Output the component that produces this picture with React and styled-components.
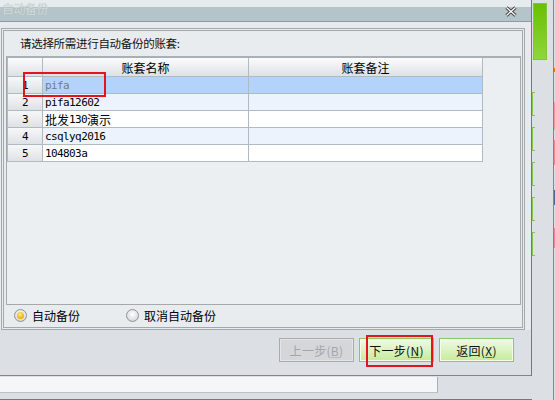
import React from "react";
import styled, { createGlobalStyle } from "styled-components";

const GlobalStyle = createGlobalStyle`
  html, body {
    margin: 0;
    padding: 0;
    background: #dcdfe3;
    overflow: hidden;
  }
  body {
    font-family: "Noto Sans CJK SC", "Liberation Sans", sans-serif;
    font-size: 12px;
    color: #000;
  }
  #root {
    width: 555px;
    height: 400px;
    overflow: hidden;
  }
`;

const Page = styled.div`
  position: relative;
  display: grid;
  grid-template-columns: 532px 21px 1px 1px;
  width: 555px;
  height: 400px;
  background: #dcdfe3;
`;

const LeftColumn = styled.div`
  display: flex;
  flex-direction: column;
  width: 532px;
  overflow: hidden;
`;

const Dialog = styled.div`
  display: flex;
  flex-direction: column;
  width: 532px;
  height: 376px;
  box-sizing: border-box;
  border-right: 1px solid #6f7a80;
  border-bottom: 1px solid #7c868c;
  background: #e8ebee;
`;

const TitleBar = styled.div`
  display: flex;
  align-items: flex-start;
  justify-content: space-between;
  height: 22px;
  box-sizing: border-box;
  padding: 2px 14px 0 2px;
  border-bottom: 1px solid #8c9ca2;
  background: linear-gradient(#e6ebed 0, #e6ebed 7px, #b4c4c8 7px, #b4c4c8 100%);
`;

const Title = styled.span`
  font-size: 12px;
  line-height: 14px;
  letter-spacing: -0.5px;
  color: #d3d9db;
  text-shadow: 0 0 1px #a9b6ba;
`;

const Close = styled.svg`
  margin-top: 4px;
`;

const Body = styled.div`
  padding: 6px 0 0 1px;
`;

const GroupBox = styled.div`
  display: flex;
  flex-direction: column;
  width: 524px;
  height: 302px;
  box-sizing: border-box;
  border: 3px double #a2a8ac;
  background: #e9ecef;
`;

const Prompt = styled.div`
  height: 25px;
  box-sizing: border-box;
  padding: 5px 0 0 16px;
  font-size: 11.5px;
  line-height: 14px;
  letter-spacing: -0.3px;
  color: #111;
`;

const GridBox = styled.div`
  height: 249px;
  margin: 0 1px 0 2px;
  box-sizing: border-box;
  border: 1px solid #a3a9ae;
  border-top: 2px solid #a9afb4;
  background: #eceff2;
`;

const Table = styled.div`
  display: flex;
  flex-direction: column;
  width: 476px;
  border-left: 1px solid #b1b9c1;
`;

const Row = styled.div`
  display: flex;
  height: ${p => (p.$header ? 19 : 17)}px;
`;

const Cell = styled.div`
  display: flex;
  align-items: center;
  justify-content: ${p => (p.$center ? "center" : "flex-start")};
  width: ${p => p.$w}px;
  box-sizing: border-box;
  padding-left: ${p => (p.$center ? 0 : 2)}px;
  border-right: 1px solid #b1b9c1;
  border-bottom: 1px solid #b1b9c1;
  background: ${p => p.$bg};
  color: ${p => p.$color || "#000"};
  font-family: "DejaVu Sans Mono", "Noto Sans CJK SC", monospace;
  font-size: 11px;
  letter-spacing: -0.6px;
  white-space: nowrap;
  overflow: hidden;
`;

const HeadCell = styled(Cell)`
  font-family: "Noto Sans CJK SC", sans-serif;
  font-size: 12px;
  letter-spacing: 0;
  background: linear-gradient(#fbfcfc, #dde1e4);
`;

const Cjk = styled.span`
  font-family: "Noto Sans CJK SC", sans-serif;
  font-size: 12px;
  letter-spacing: 0;
`;

const RadioRow = styled.div`
  display: flex;
  align-items: center;
  height: 21px;
  padding-left: 10px;
`;

const RadioItem = styled.label`
  display: flex;
  align-items: center;
  gap: 5px;
  width: 112px;
  font-size: 12px;
`;

const RadioCircle = styled.span`
  display: flex;
  align-items: center;
  justify-content: center;
  width: 13px;
  height: 13px;
  box-sizing: border-box;
  border-radius: 50%;
  border: 1px solid #8e959a;
  background: radial-gradient(circle at 50% 40%, #ffffff 0, #e2e4e6 55%, #c0c4c7 100%);

  &::after {
    content: "";
    display: ${p => (p.$checked ? "block" : "none")};
    width: 7px;
    height: 7px;
    border-radius: 50%;
    background: radial-gradient(circle at 45% 35%, #ffe98a, #f5b300 65%, #d88800);
  }
`;

const ButtonArea = styled.div`
  display: flex;
  flex: 1;
  align-items: flex-start;
  justify-content: flex-end;
  gap: 5px;
  padding: 8px 17px 0 0;
  background: #dcdfe3;
`;

const Button = styled.button`
  width: 75px;
  height: 24px;
  box-sizing: border-box;
  padding: 0;
  border: 1px solid ${p => (p.disabled ? "#a7abae" : "#8cc65c")};
  box-shadow: inset 0 0 0 1px ${p => (p.disabled ? "#e2e4e6" : "#f4fbec")};
  background: ${p =>
    p.disabled ? "#d4d6d9" : "linear-gradient(#f1f9e8, #c6ec9a)"};
  color: ${p => (p.disabled ? "#a2a6aa" : "#111")};
  font-family: "Noto Sans CJK SC", sans-serif;
  font-size: 12px;
  letter-spacing: 0.3px;

  u {
    text-decoration-color: ${p => (p.disabled ? "#b8bcbf" : "#666")};
  }
`;

const LowerStrip = styled.div`
  height: 24px;
  box-sizing: border-box;
  padding-top: 1px;
  border-bottom: 1px solid #6f797e;
  background: #dcdfe3;
`;

const LightPanel = styled.div`
  width: 438px;
  height: 16px;
  box-sizing: border-box;
  border-right: 1px solid #a9afb3;
  border-bottom: 1px solid #bcc1c4;
  background: #f4f6f8;
`;

const StripMain = styled.div`
  display: flex;
  flex-direction: column;
  width: 21px;
  background: #dcdfe3;
`;

const GreenBar = styled.div`
  width: 14px;
  height: 57px;
  margin: 3px 0 0 1px;
  background: linear-gradient(#68c000, #8fd63e);
  box-shadow: inset 0 0 0 1px #7cc838;
`;

const Brackets = styled.div`
  display: flex;
  flex-direction: column;
  gap: 11px;
  margin-top: 32px;
`;

const Bracket = styled.div`
  width: 3px;
  height: 24px;
  box-sizing: border-box;
  border: 1px solid #86c456;
  border-right: none;
`;

const EdgeLine = styled.div`
  width: 1px;
  background: #7e878c;
`;

const Bits = styled.div`
  display: flex;
  flex-direction: column;
  width: 1px;
`;

const Bit = styled.div`
  height: ${p => p.$h}px;
  background: ${p => p.$c};
`;

const RedBox = styled.div`
  position: absolute;
  left: ${p => p.$x}px;
  top: ${p => p.$y}px;
  width: ${p => p.$w}px;
  height: ${p => p.$h}px;
  box-sizing: border-box;
  border: 2px solid #e4141c;
  pointer-events: none;
`;

const rows = [
  { no: "1", name: "pifa", selected: true },
  { no: "2", name: "pifa12602" },
  { no: "3", name: <><Cjk>批发</Cjk>130<Cjk>演示</Cjk></> },
  { no: "4", name: "csqlyq2016" },
  { no: "5", name: "104803a" },
];

const bits = [
  { h: 68, c: "transparent" },
  { h: 4, c: "#e07a10" },
  { h: 30, c: "transparent" },
  { h: 28, c: "#f09a96" },
  { h: 10, c: "transparent" },
  { h: 25, c: "#ee8c88" },
  { h: 25, c: "transparent" },
  { h: 15, c: "#4a6a9a" },
  { h: 23, c: "transparent" },
  { h: 20, c: "#ec8a88" },
];

const rowBg = (r, i) => (r.selected ? "#b3d3fb" : i % 2 === 1 ? "#edf3fd" : "#ffffff");

export default function App() {
  return (
    <Page>
      <GlobalStyle />
      <LeftColumn>
        <Dialog>
          <TitleBar>
            <Title>自动备份</Title>
            <Close width="12" height="11" viewBox="0 0 12 11">
              <path d="M1.5 1.5 L10.5 9.5 M10.5 1.5 L1.5 9.5" stroke="#3c3f41" strokeWidth="3.2" />
              <path d="M1.5 1.5 L10.5 9.5 M10.5 1.5 L1.5 9.5" stroke="#ffffff" strokeWidth="1.2" />
            </Close>
          </TitleBar>
          <Body>
            <GroupBox>
              <Prompt>请选择所需进行自动备份的账套:</Prompt>
              <GridBox>
                <Table>
                  <Row $header>
                    <HeadCell $w={35} $center />
                    <HeadCell $w={206} $center>账套名称</HeadCell>
                    <HeadCell $w={234} $center>账套备注</HeadCell>
                  </Row>
                  {rows.map((r, i) => (
                    <Row key={r.no}>
                      <Cell $w={35} $center $bg="linear-gradient(#f6f7f8, #dfe2e5)">
                        {r.no}
                      </Cell>
                      <Cell $w={206} $bg={rowBg(r, i)} $color={r.selected ? "#6f7d8c" : "#000"}>
                        {r.name}
                      </Cell>
                      <Cell $w={234} $bg={rowBg(r, i)} />
                    </Row>
                  ))}
                </Table>
              </GridBox>
              <RadioRow>
                <RadioItem>
                  <RadioCircle $checked />
                  自动备份
                </RadioItem>
                <RadioItem>
                  <RadioCircle />
                  取消自动备份
                </RadioItem>
              </RadioRow>
            </GroupBox>
          </Body>
          <ButtonArea>
            <Button disabled>上一步(<u>B</u>)</Button>
            <Button>下一步(<u>N</u>)</Button>
            <Button>返回(<u>X</u>)</Button>
          </ButtonArea>
        </Dialog>
        <LowerStrip>
          <LightPanel />
        </LowerStrip>
      </LeftColumn>
      <StripMain>
        <GreenBar />
        <Brackets>
          <Bracket />
          <Bracket />
          <Bracket />
          <Bracket />
          <Bracket />
        </Brackets>
      </StripMain>
      <EdgeLine />
      <Bits>
        {bits.map((b, i) => (
          <Bit key={i} $h={b.h} $c={b.c} />
        ))}
      </Bits>
      <RedBox $x={23} $y={72} $w={83} $h={25} />
      <RedBox $x={366} $y={335} $w={67} $h={32} />
    </Page>
  );
}
